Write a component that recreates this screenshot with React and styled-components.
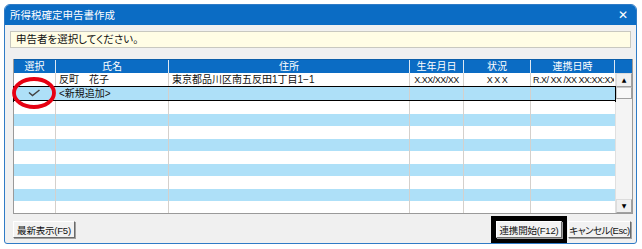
import React from 'react';
import styled, { createGlobalStyle } from 'styled-components';

const Global = createGlobalStyle`
  html, body { margin: 0; padding: 0; background: #ffffff; }
  body {
    font-family: "Liberation Sans", "Noto Sans CJK JP", sans-serif;
    font-size: 11px;
    font-feature-settings: "palt";
    line-height: 1;
  }
`;

const COLS = '42px 113px 241px 54px 67px 84px';

const Window = styled.div`
  margin: 4px 0 0 4px;
  width: 633px;
  height: 240px;
  box-sizing: border-box;
  border: 1px solid #2f7bc6;
  border-radius: 6px 6px 3px 3px;
  background: #f0f0f0;
  display: flex;
  flex-direction: column;
  overflow: hidden;
  position: relative;
`;

const TitleBar = styled.div`
  height: 20px;
  flex: none;
  background: #0b6cc4;
  color: #fff;
  display: flex;
  align-items: center;
  justify-content: space-between;
  padding: 0 8px 0 5px;
  font-size: 10.5px;
`;

const Close = styled.span`
  font-family: "DejaVu Sans", sans-serif;
  font-size: 12px;
  margin-top: -1px;
`;

const Body = styled.div`
  flex: 1;
  padding: 6px 5px 0 5px;
  display: flex;
  flex-direction: column;
`;

const Message = styled.div`
  height: 15px;
  flex: none;
  border: 1px solid #c8c8c0;
  background: #fffde5;
  display: flex;
  align-items: center;
  padding-left: 5px;
  font-size: 10.5px;
  color: #111;
`;

const Table = styled.div`
  margin: 11px 0 0 3px;
  width: 618px;
  border: 1px solid #9a9a9a;
  border-top: none;
  background: #fff;
  flex: none;
`;

const HeaderRow = styled.div`
  display: grid;
  grid-template-columns: ${COLS} 16px;
  height: 13px;
  background: #0b6cc4;
  color: #fff;
  border-top: 1px solid #0b5ea9;
`;

const HeadCell = styled.div`
  display: flex;
  align-items: center;
  justify-content: center;
  font-size: 10px;
  white-space: nowrap;
  overflow: hidden;
  border-right: 1px solid ${p => (p.$last ? 'transparent' : '#dfe9f3')};
`;

const BodyArea = styled.div`
  display: flex;
`;

const Rows = styled.div`
  width: 601px;
  display: flex;
  flex-direction: column;
`;

const Row = styled.div`
  display: grid;
  grid-template-columns: ${COLS};
  height: ${p => p.$h}px;
  flex: none;
  box-sizing: border-box;
  background: ${p => (p.$blue ? '#aee0f8' : '#ffffff')};
  outline: ${p => (p.$sel ? '1px solid #000' : 'none')};
  border-bottom: ${p => (p.$sel ? '1px solid #000' : 'none')};
  position: relative;
`;

const Cell = styled.div`
  display: flex;
  align-items: center;
  justify-content: ${p => p.$align || 'flex-start'};
  padding: 0 ${p => (p.$tight ? 2 : 3)}px;
  font-size: ${p => (p.$tight ? 9 : 10)}px;
  letter-spacing: ${p => (p.$tight ? '-0.5px' : '0')};
  color: #111;
  white-space: nowrap;
  overflow: hidden;
  border-right: 1px solid ${p => (p.$last ? 'transparent' : '#d4d0cc')};
`;

const Scrollbar = styled.div`
  width: 16px;
  display: flex;
  flex-direction: column;
  background: #f4f4f4;
  border-left: 1px solid #e0e0e0;
`;

const ScrollBtn = styled.div`
  height: 14px;
  box-sizing: border-box;
  border: 1px solid #dcdcdc;
  border-right-color: #a0a0a0;
  border-bottom-color: #a0a0a0;
  background: #f0f0f0;
  display: flex;
  align-items: center;
  justify-content: center;
  font-family: "DejaVu Sans", sans-serif;
  font-size: 6px;
  color: #000;
`;

const Thumb = styled.div`
  height: 12px;
  box-sizing: border-box;
  border: 1px solid #c8c8c8;
  border-right-color: #a0a0a0;
  border-bottom-color: #a0a0a0;
  background: #f8f8f8;
`;

const Track = styled.div`
  flex: 1;
`;

const Footer = styled.div`
  display: flex;
  align-items: center;
  padding: 7px 0 0 3px;
`;

const Button = styled.button`
  font-family: inherit;
  font-feature-settings: "palt";
  font-size: 9.5px;
  letter-spacing: ${p => (p.$tight ? '-0.5px' : '-0.2px')};
  height: 17px;
  padding: 0;
  white-space: nowrap;
  background: #f2f2f2;
  color: #111;
  border: 1px solid;
  border-color: #ffffff #6a6a6a #6a6a6a #ffffff;
  box-shadow: 1px 1px 0 #a0a0a0;
  display: flex;
  align-items: center;
  justify-content: center;
  width: ${p => p.$w}px;
  margin-left: ${p => p.$ml || 0}px;
`;

const Spacer = styled.div`
  flex: 1;
`;

const Focus = styled.div`
  border: 5px solid #000;
  margin: -6px 0;
`;

const Circle = styled.svg`
  position: absolute;
  left: 5px;
  top: 71px;
`;

const rows = [
  { h: 14, blue: false, cells: ['', '反町　花子', '東京都品川区南五反田1丁目1−1', 'X.XX/XX/XX', 'X X X', 'R.X/ XX /XX XX:XX:XX'] },
  { h: 14, blue: true, sel: true, cells: ['', '<新規追加>', '', '', '', ''] },
];
const stripes = [13, 12, 13, 12, 13, 12, 13, 12, 12];
const aligns = ['center', 'flex-start', 'flex-start', 'center', 'center', 'flex-start'];

export default function App() {
  return (
    <>
      <Global />
      <Window>
        <TitleBar>
          <span>所得税確定申告書作成</span>
          <Close>✕</Close>
        </TitleBar>
        <Body>
          <Message>申告者を選択してください。</Message>
          <Table>
            <HeaderRow>
              {['選択', '氏名', '住所', '生年月日', '状況', '連携日時'].map(h => (
                <HeadCell key={h}>{h}</HeadCell>
              ))}
              <HeadCell $last />
            </HeaderRow>
            <BodyArea>
              <Rows>
                {rows.map((r, i) => (
                  <Row key={i} $h={r.h} $blue={r.blue} $sel={r.sel}>
                    {r.cells.map((c, j) => (
                      <Cell key={j} $align={aligns[j]} $last={j === 5} $tight={j >= 3}>{c}</Cell>
                    ))}
                  </Row>
                ))}
                {stripes.map((h, i) => (
                  <Row key={'s' + i} $h={h} $blue={i % 2 === 1}>
                    {aligns.map((a, j) => (
                      <Cell key={j} $last={j === 5} />
                    ))}
                  </Row>
                ))}
              </Rows>
              <Scrollbar>
                <ScrollBtn>▲</ScrollBtn>
                <Thumb />
                <Track />
                <ScrollBtn>▼</ScrollBtn>
              </Scrollbar>
            </BodyArea>
          </Table>
          <Footer>
            <Button $w={62}>最新表示(F5)</Button>
            <Spacer />
            <Focus>
              <Button $w={66}>連携開始(F12)</Button>
            </Focus>
            <Button $w={63} $ml={1} $tight>キャンセル(Esc)</Button>
          </Footer>
        </Body>
        <Circle width="48" height="34" viewBox="0 0 48 34">
          <ellipse cx="24" cy="17" rx="20" ry="14" fill="none" stroke="#e60012" strokeWidth="3.8" />
          <path d="M19 16.5 L22.5 19.5 L29.5 14" fill="none" stroke="#444" strokeWidth="1.5" />
        </Circle>
      </Window>
    </>
  );
}
